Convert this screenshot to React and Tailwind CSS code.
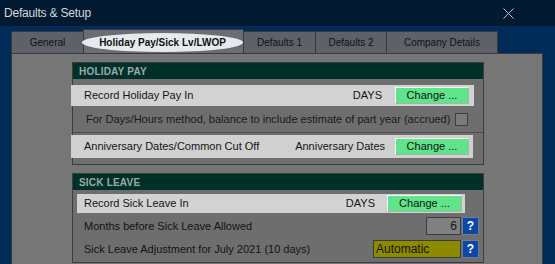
import React from 'react';

function ChangeButton({ className = '' }) {
    return (
        <button
            type="button"
            className={`h-[17px] bg-[#5fe38b] border border-t-[#f4fff6] border-l-[#f4fff6] border-r-[#9fb8a5] border-b-[#9fb8a5] text-[11px] text-[#111] leading-none flex items-center justify-center ${className}`}
        >
            Change ...
        </button>
    );
}

function HelpButton() {
    return (
        <button
            type="button"
            className="w-[17px] h-[18px] bg-[#0c47a6] border border-[#6d7d99] text-white font-bold text-[12px] leading-none flex items-center justify-center"
        >
            ?
        </button>
    );
}

function SectionHeader({ title }) {
    return (
        <div className="h-[16px] bg-[#00302a] pl-[6px] flex items-center text-[10px] font-bold text-[#9aaca6] tracking-[0.2px]">
            {title}
        </div>
    );
}

const tabs = [
    { label: 'General', w: 'w-[72px]' },
    { label: 'Holiday Pay/Sick Lv/LWOP', w: 'w-[160px]', active: true },
    { label: 'Defaults 1', w: 'w-[72px]' },
    { label: 'Defaults 2', w: 'w-[71px]' },
    { label: 'Company Details', w: 'w-[112px]', last: true },
];

export default function App() {
    return (
        <div className="w-[555px] h-[264px] overflow-hidden bg-[#012c5a] font-['Liberation_Sans',Arial,sans-serif] text-[11px] text-[#141414]">
            {/* title bar */}
            <div className="h-[26px] bg-[#011a32] flex items-center justify-between pl-[4px] pr-[41px]">
                <span className="text-[12px] text-[#d3d9df] tracking-[-0.2px]">Defaults &amp; Setup</span>
                <svg width="11" height="11" viewBox="0 0 11 11" className="mt-[1px]">
                    <path d="M0.5 0.5 L10.5 10.5 M10.5 0.5 L0.5 10.5" stroke="#b9c1c9" strokeWidth="1" fill="none" />
                </svg>
            </div>

            <div className="pl-[11px] pr-[12px] pt-[3px]">
                {/* tabs */}
                <div className="flex items-end h-[24px]">
                    {tabs.map((t) =>
                        t.active ? (
                            <div
                                key={t.label}
                                className={`${t.w} h-[24px] border-l border-t border-[#3a3a3a] bg-[#6a6d71] flex items-end pb-[1px]`}
                            >
                                <div className="-ml-[2px] w-[161px] h-[19px] rounded-[50%] bg-[#e6eaee] flex items-center justify-center text-[10px] font-bold text-[#111]">
                                    {t.label}
                                </div>
                            </div>
                        ) : (
                            <div
                                key={t.label}
                                className={`${t.w} h-[22px] border-l border-t ${t.last ? 'border-r' : ''} border-[#3a3a3a] bg-[#5e6268] flex items-center justify-center text-[10px] text-[#111]`}
                            >
                                {t.label}
                            </div>
                        )
                    )}
                </div>

                {/* panel */}
                <div className="h-[240px] border border-[#3a3a3a] bg-[#767676] pl-[60px] pt-[8px]">
                    {/* holiday pay */}
                    <div className="w-[412px] border border-[#3c3c3c] bg-[#6e6e6e]">
                        <SectionHeader title="HOLIDAY PAY" />
                        <div className="pt-[6px] pb-[6px]">
                            <div className="-ml-[2px] mr-[9px] h-[21px] bg-[#d2d2d2] flex items-center pl-[13px] pr-[5px]">
                                <span className="flex-1">Record Holiday Pay In</span>
                                <span className="mr-[13px]">DAYS</span>
                                <ChangeButton className="w-[74px]" />
                            </div>
                            <div className="h-[26px] flex items-center pl-[13px] pr-[15px]">
                                <span className="flex-1 text-[#1a1a1a]">For Days/Hours method, balance to include estimate of part year (accrued)</span>
                                <span className="w-[13px] h-[13px] border border-[#3f3f3f] bg-[#7b7b7b]" />
                            </div>
                            <div className="h-px bg-[#4d4d4d]" />
                            <div className="mt-[2px] -ml-[2px] mr-[10px] h-[23px] bg-[#d0d0d0] flex items-center pl-[13px] pr-[4px]">
                                <span className="flex-1">Anniversary Dates/Common Cut Off</span>
                                <span className="mr-[10px]">Anniversary Dates</span>
                                <ChangeButton className="w-[74px]" />
                            </div>
                        </div>
                    </div>

                    {/* sick leave */}
                    <div className="mt-[8px] w-[412px] border border-[#3c3c3c] bg-[#6e6e6e]">
                        <SectionHeader title="SICK LEAVE" />
                        <div className="pt-[4px] pb-[4px]">
                            <div className="ml-[4px] w-[388px] h-[19px] bg-[#d2d2d2] flex items-center pl-[7px] pr-[3px]">
                                <span className="flex-1">Record Sick Leave In</span>
                                <span className="mr-[12px]">DAYS</span>
                                <ChangeButton className="w-[75px]" />
                            </div>
                            <div className="mt-[4px] h-[18px] flex items-center pl-[11px] pr-[4px]">
                                <span className="flex-1">Months before Sick Leave Allowed</span>
                                <span className="w-[35px] h-[18px] border border-[#3c3c3c] bg-[#808080] flex items-center justify-end pr-[3px] text-[12px]">6</span>
                                <span className="ml-[1px]"><HelpButton /></span>
                            </div>
                            <div className="mt-[5px] h-[18px] flex items-center pl-[11px] pr-[4px]">
                                <span className="flex-1">Sick Leave Adjustment for July 2021 (10 days)</span>
                                <span className="w-[88px] h-[18px] border border-[#3c3c3c] bg-[#8e8a00] flex items-center pl-[2px] text-[12px]">Automatic</span>
                                <span className="ml-[1px]"><HelpButton /></span>
                            </div>
                        </div>
                    </div>
                </div>
            </div>
        </div>
    );
}
